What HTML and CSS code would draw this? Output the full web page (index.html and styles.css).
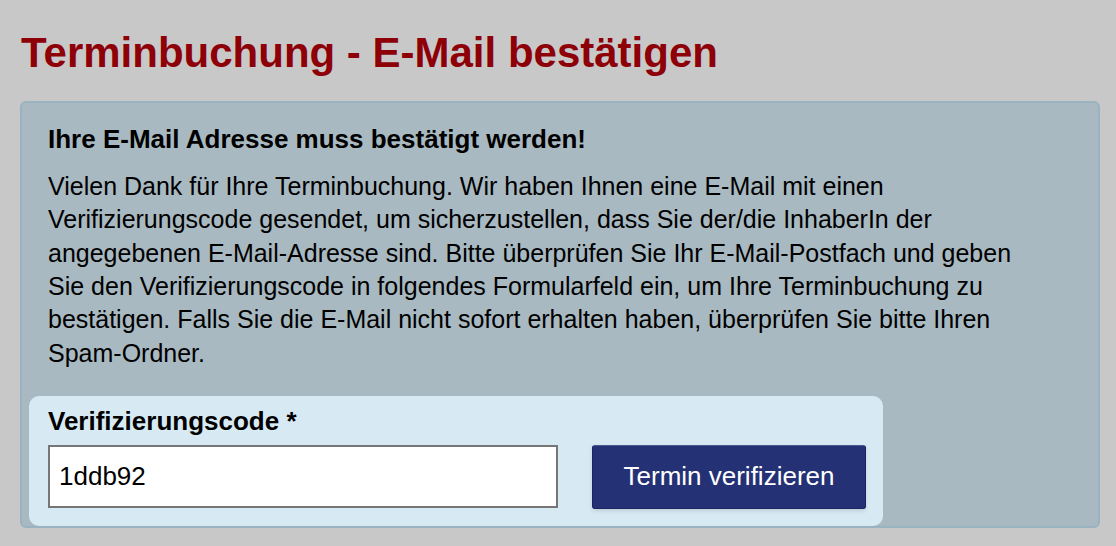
FILE: index.html
```html
<!DOCTYPE html>
<html lang="de">
<head>
<meta charset="utf-8">
<title>Terminbuchung - E-Mail bestätigen</title>
<link rel="stylesheet" href="styles.css">
</head>
<body>
<main class="page">
  <h1 class="title">Terminbuchung - E-Mail bestätigen</h1>
  <section class="notice">
    <div class="notice-text">
      <h2 class="notice-heading">Ihre E-Mail Adresse muss bestätigt werden!</h2>
      <p class="notice-body">Vielen Dank für Ihre Terminbuchung. Wir haben Ihnen eine E-Mail mit einen Verifizierungscode gesendet, um sicherzustellen, dass Sie der/die InhaberIn der angegebenen E-Mail-Adresse sind. Bitte überprüfen Sie Ihr E-Mail-Postfach und geben Sie den Verifizierungscode in folgendes Formularfeld ein, um Ihre Terminbuchung zu bestätigen. Falls Sie die E-Mail nicht sofort erhalten haben, überprüfen Sie bitte Ihren Spam-Ordner.</p>
    </div>
    <form class="verify-form" onsubmit="return false;">
      <label class="verify-label" for="code">Verifizierungscode *</label>
      <div class="verify-row">
        <input class="verify-input" id="code" type="text" value="1ddb92">
        <button class="verify-button" type="submit">Termin verifizieren</button>
      </div>
    </form>
  </section>
</main>
</body>
</html>
```

FILE: styles.css
```css
html, body {
  margin: 0;
  padding: 0;
  background: #c8c8c8;
}

body {
  font-family: "Liberation Sans", Arial, sans-serif;
  color: #000;
}

.page {
  padding: 0 16px 0 20px;
}

.title {
  margin: 0;
  padding: 27px 0 0 1px;
  font-size: 42px;
  line-height: 52px;
  font-weight: bold;
  color: #8e0008;
}

.notice {
  margin-top: 22px;
  background: #a9b9c1;
  border: 2px solid #9ab3c1;
  border-radius: 6px;
  padding: 0 0 0 7px;
  box-sizing: border-box;
  width: 1080px;
}

.notice-text {
  padding: 21px 60px 26px 19px;
}

.notice-heading {
  margin: 0 0 16px;
  font-size: 26px;
  line-height: 30px;
  font-weight: bold;
}

.notice-body {
  margin: 0;
  font-size: 25px;
  line-height: 33.33px;
}

.verify-form {
  width: 854px;
  box-sizing: border-box;
  background: #d7eaf4;
  border-radius: 10px;
  padding: 10px 17px 17px 19px;
}

.verify-label {
  display: block;
  font-size: 26px;
  line-height: 30px;
  font-weight: bold;
  margin-bottom: 9px;
}

.verify-row {
  display: flex;
  align-items: flex-start;
  gap: 34px;
}

.verify-input {
  width: 510px;
  height: 63px;
  box-sizing: border-box;
  border: 2px solid #767676;
  background: #fff;
  padding: 0 9px;
  font-family: "Liberation Sans", Arial, sans-serif;
  font-size: 26px;
  color: #000;
  outline: none;
}

.verify-button {
  width: 274px;
  height: 64px;
  box-sizing: border-box;
  border: 1px solid #1b2460;
  border-top-color: #4a5490;
  border-radius: 3px;
  background: #253175;
  color: #fff;
  font-family: "Liberation Sans", Arial, sans-serif;
  font-size: 26px;
  box-shadow: 0 2px 4px rgba(0, 0, 0, 0.12);
  cursor: pointer;
}
```
